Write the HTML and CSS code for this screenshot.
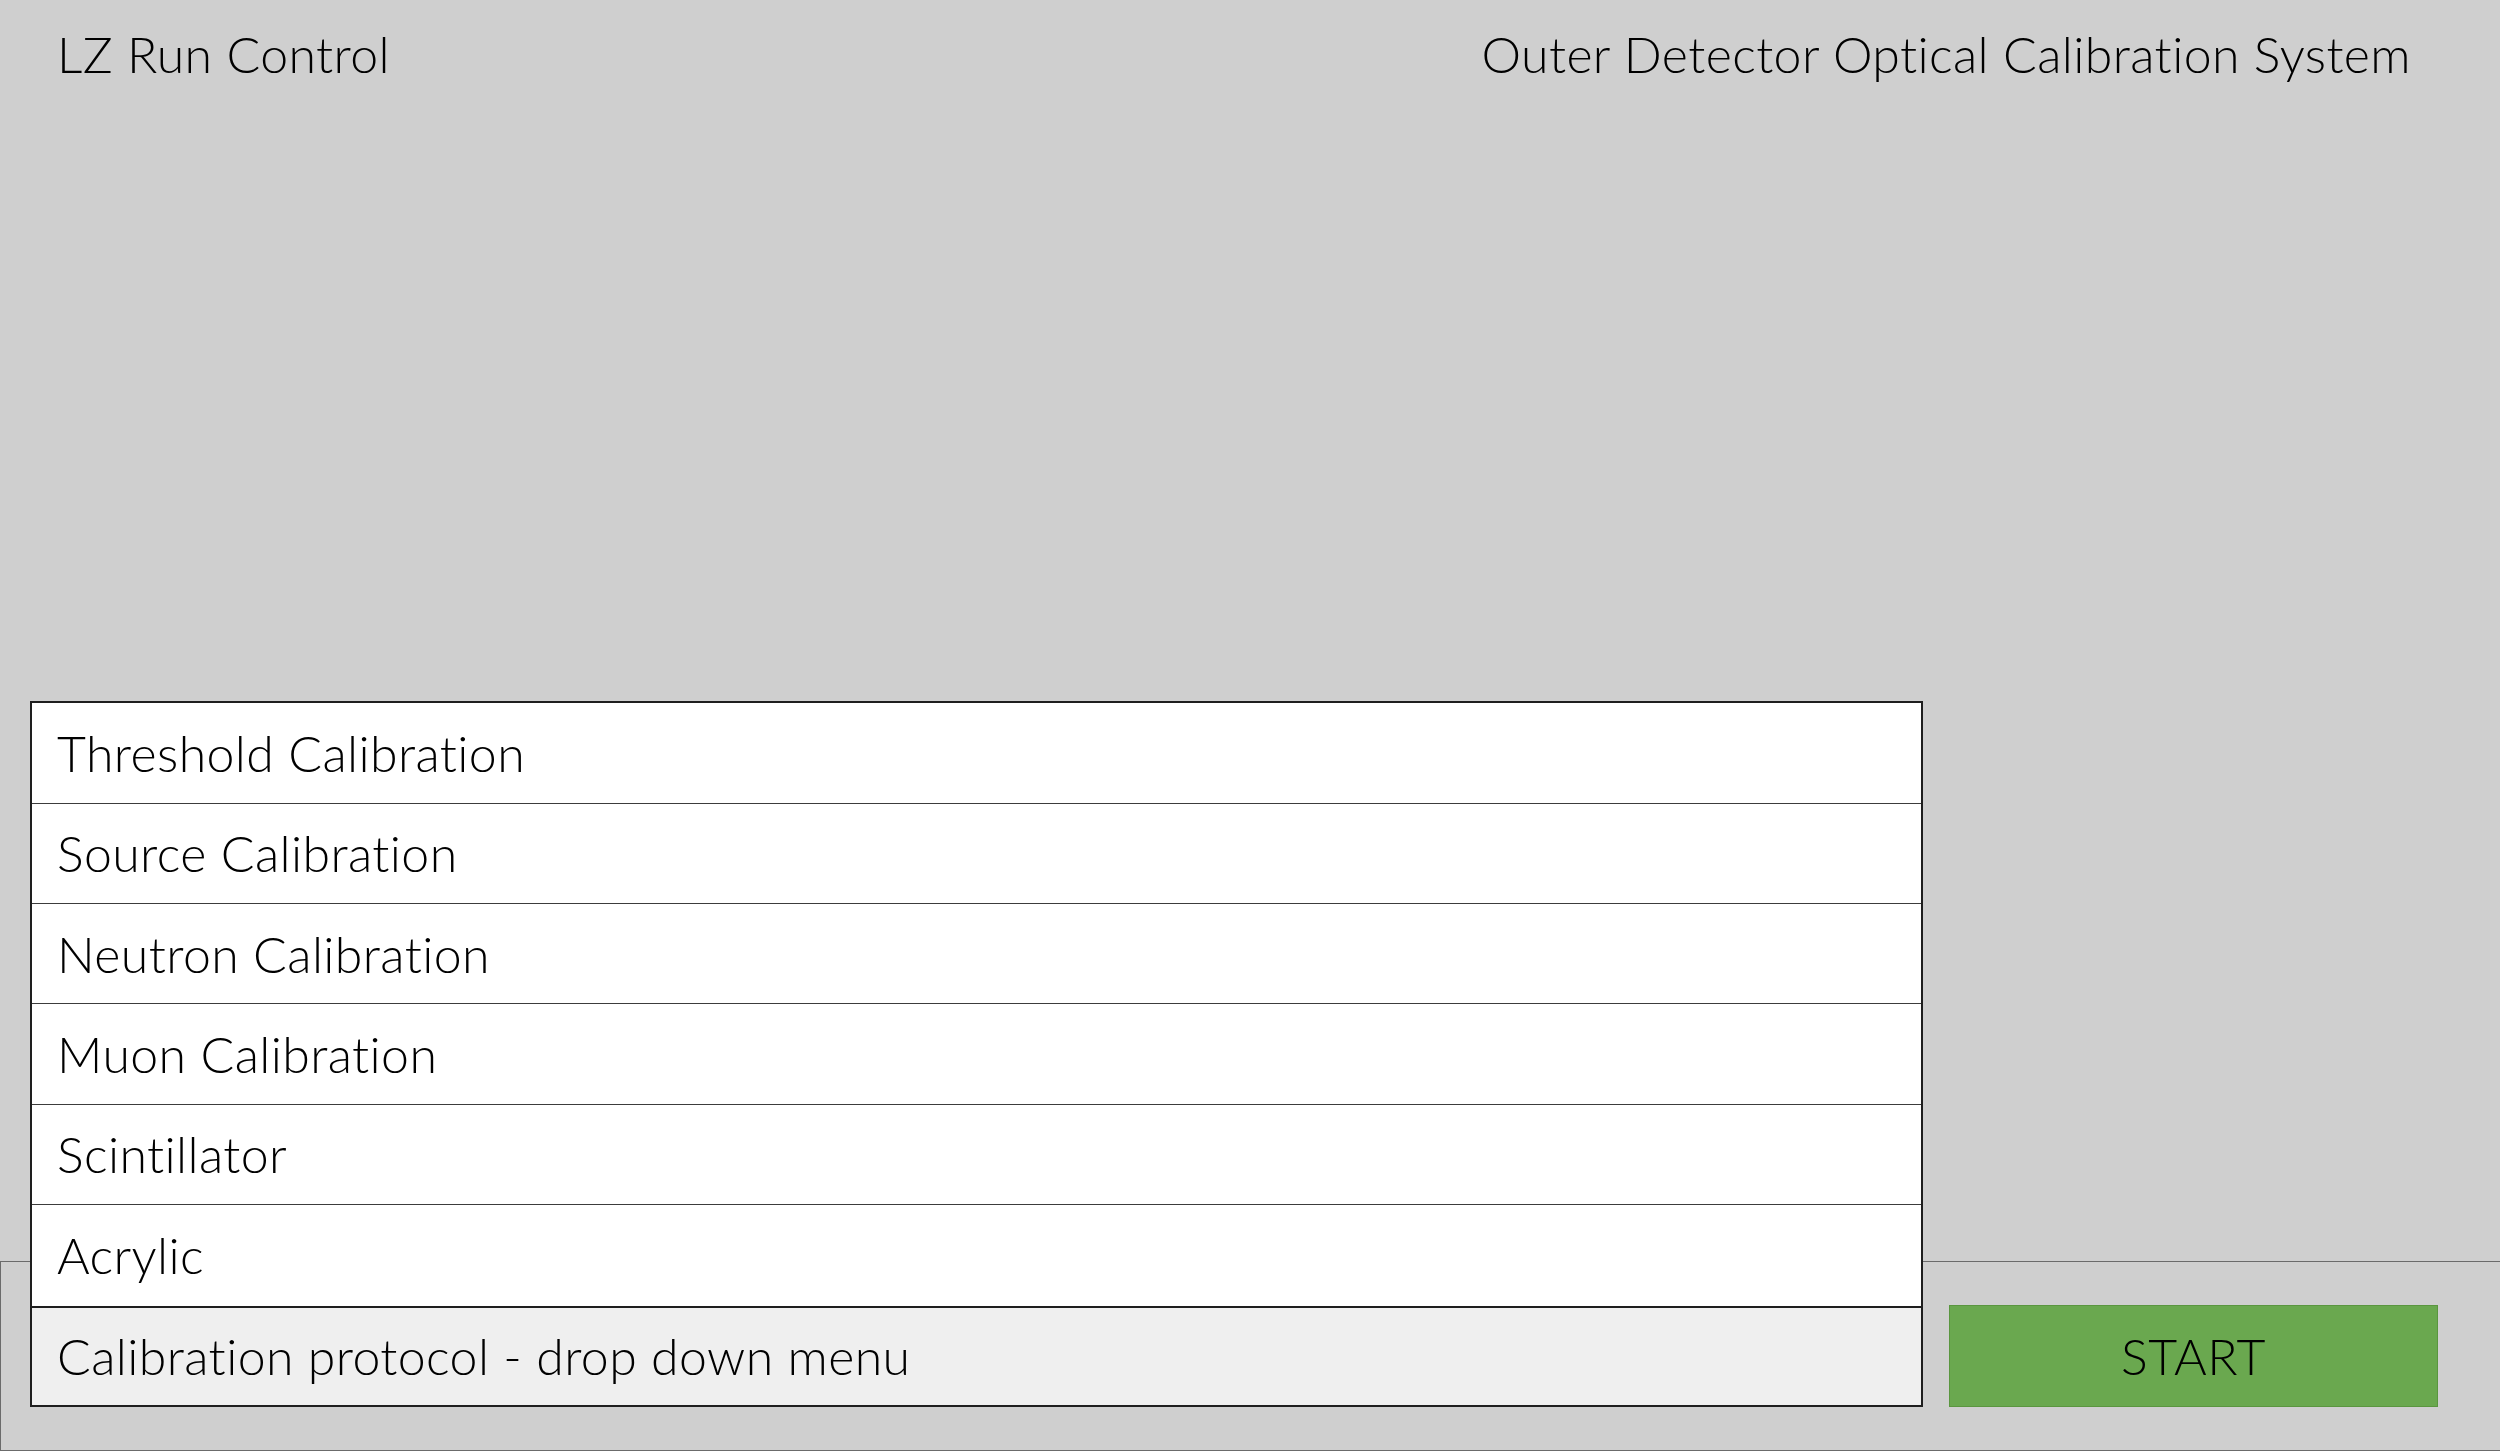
FILE: index.html
```html
<!DOCTYPE html>
<html lang="en">
<head>
<meta charset="utf-8">
<title>LZ Run Control</title>
<link rel="stylesheet" href="styles.css">
</head>
<body>
<div class="app">
  <header class="topbar">
    <div class="app-name">LZ Run Control</div>
    <div class="system-name">Outer Detector Optical Calibration System</div>
  </header>
  <main class="content"></main>
  <footer class="controlbar">
    <div class="select-wrap">
      <ul class="options">
        <li class="option">Threshold Calibration</li>
        <li class="option">Source Calibration</li>
        <li class="option">Neutron Calibration</li>
        <li class="option">Muon Calibration</li>
        <li class="option">Scintillator</li>
        <li class="option">Acrylic</li>
      </ul>
      <div class="select">Calibration protocol - drop down menu</div>
    </div>
    <button class="start">START</button>
  </footer>
</div>
</body>
</html>
```
FILE: styles.css
```css
* { box-sizing: border-box; }
html, body {
  margin: 0;
  padding: 0;
  height: 100%;
}
body {
  background: #cfcfcf;
  font-family: "Lato", "Noto Sans", sans-serif;
  font-weight: 300;
  font-variant-ligatures: none;
  letter-spacing: 0.4px;
  color: #000;
  overflow: hidden;
}
.app {
  height: 100vh;
  display: flex;
  flex-direction: column;
}
.topbar {
  display: flex;
  justify-content: space-between;
  align-items: flex-start;
  padding: 24px 89px 0 57px;
  font-size: 50px;
  line-height: 1.2;
}
.content {
  flex: 1;
}
.controlbar {
  display: flex;
  align-items: center;
  gap: 26px;
  padding: 43px 62px 43px 29px;
  border-top: 1px solid #6b6b6b;
  border-left: 1px solid #6b6b6b;
  border-bottom: 1px solid #6b6b6b;
}
.select-wrap {
  position: relative;
  flex: 1;
}
.select {
  height: 101px;
  display: flex;
  align-items: center;
  padding-left: 25px;
  background: #efefef;
  border: 2px solid #1e1e1e;
  font-size: 50px;
  line-height: 1.2;
}
.options {
  position: absolute;
  left: 0;
  right: 0;
  bottom: 100%;
  margin: 0;
  padding: 0;
  list-style: none;
  background: #fff;
  border: 2px solid #1e1e1e;
  border-bottom: none;
}
.option {
  height: 100.4px;
  display: flex;
  align-items: center;
  padding-left: 25px;
  font-size: 50px;
  line-height: 1.2;
  border-bottom: 1px solid #3c3c3c;
}
.option:last-child {
  border-bottom: none;
}
.start {
  width: 489px;
  height: 102px;
  background: #6aa84f;
  border: 1px solid #5a963f;
  font-family: "Lato", "Noto Sans", sans-serif;
  font-weight: 300;
  letter-spacing: 0.4px;
  font-size: 50px;
  color: #000;
  padding: 0;
  cursor: pointer;
}
```
